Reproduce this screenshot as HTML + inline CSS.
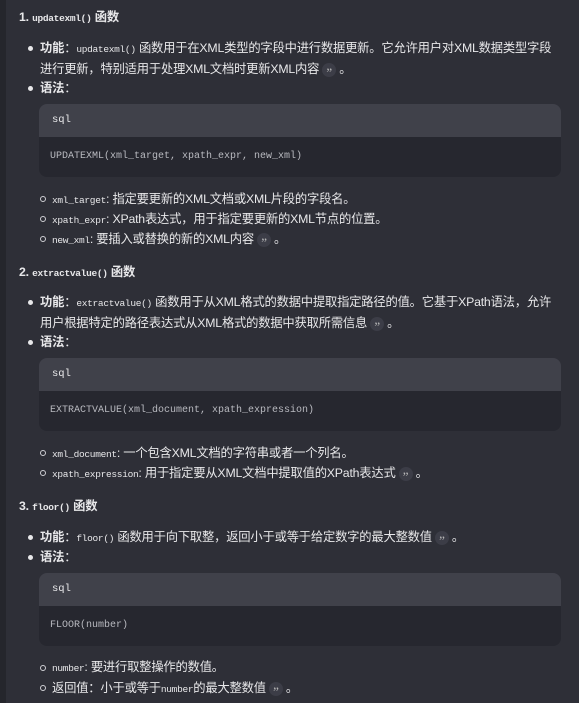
<!DOCTYPE html>
<html><head><meta charset="utf-8"><style>
*{margin:0;padding:0;box-sizing:border-box}
body{width:579px;height:703px;background:#2e2f37;position:relative;overflow:hidden;font-family:"Liberation Sans","Noto Sans CJK SC",sans-serif;font-size:12.3px;color:#e8e8ea}
.strip{position:absolute;left:0;top:0;width:6px;height:703px;background:#25262c}
.t{position:absolute;white-space:nowrap;line-height:16px;letter-spacing:-0.2px}
.h{font-weight:bold}
.m{font-family:"Liberation Mono",monospace;font-size:9.5px;letter-spacing:-0.3px}
b{font-weight:bold}
.dot{position:absolute;width:5px;height:5px;border-radius:50%;background:#e8e8ea}
.circ{position:absolute;width:6px;height:6px;border-radius:50%;border:1px solid #cfcfd4}
.code{position:absolute;left:39px;width:522px;border-radius:8px;overflow:hidden}
.ch{height:33px;background:#40414a;font-family:"Liberation Mono",monospace;font-size:10.5px;padding:10px 13px;color:#e8e8ea}
.cb{height:40px;background:#26272f;font-family:"Liberation Mono",monospace;font-size:10px;padding:14px 11px;color:#b9bac0}
.q{display:inline-block;width:14px;height:14px;border-radius:50%;background:#3c3d47;color:#bbb;font-size:13px;text-align:center;line-height:20px;vertical-align:middle;margin:0 3px;font-family:"Liberation Serif",serif;overflow:hidden}
</style></head><body>
<div class="strip"></div>

<div class="t h" style="left:19px;top:9px">1. <span class="m">updatexml()</span> 函数</div>
<div class="dot" style="left:28px;top:46px"></div>
<div class="t" style="left:40px;top:40px"><b>功能</b>：<span class="m">updatexml()</span> 函数用于在XML类型的字段中进行数据更新。它允许用户对XML数据类型字段</div>
<div class="t" style="left:40px;top:61px">进行更新，特别适用于处理XML文档时更新XML内容<span class="q">”</span>。</div>
<div class="dot" style="left:28px;top:86px"></div>
<div class="t" style="left:40px;top:80px"><b>语法</b>：</div>
<div class="code" style="top:104px"><div class="ch">sql</div><div class="cb">UPDATEXML(xml_target, xpath_expr, new_xml)</div></div>
<div class="circ" style="left:40px;top:196px"></div>
<div class="t" style="left:52px;top:191px"><span class="m">xml_target</span>: 指定要更新的XML文档或XML片段的字段名。</div>
<div class="circ" style="left:40px;top:216px"></div>
<div class="t" style="left:52px;top:211px"><span class="m">xpath_expr</span>: XPath表达式，用于指定要更新的XML节点的位置。</div>
<div class="circ" style="left:40px;top:236px"></div>
<div class="t" style="left:52px;top:231px"><span class="m">new_xml</span>: 要插入或替换的新的XML内容<span class="q">”</span>。</div>

<div class="t h" style="left:19px;top:264px">2. <span class="m">extractvalue()</span> 函数</div>
<div class="dot" style="left:28px;top:300px"></div>
<div class="t" style="left:40px;top:294px"><b>功能</b>：<span class="m">extractvalue()</span> 函数用于从XML格式的数据中提取指定路径的值。它基于XPath语法，允许</div>
<div class="t" style="left:40px;top:315px">用户根据特定的路径表达式从XML格式的数据中获取所需信息<span class="q">”</span>。</div>
<div class="dot" style="left:28px;top:340px"></div>
<div class="t" style="left:40px;top:334px"><b>语法</b>：</div>
<div class="code" style="top:358px"><div class="ch">sql</div><div class="cb">EXTRACTVALUE(xml_document, xpath_expression)</div></div>
<div class="circ" style="left:40px;top:450px"></div>
<div class="t" style="left:52px;top:445px"><span class="m">xml_document</span>: 一个包含XML文档的字符串或者一个列名。</div>
<div class="circ" style="left:40px;top:470px"></div>
<div class="t" style="left:52px;top:465px"><span class="m">xpath_expression</span>: 用于指定要从XML文档中提取值的XPath表达式<span class="q">”</span>。</div>

<div class="t h" style="left:19px;top:498px">3. <span class="m">floor()</span> 函数</div>
<div class="dot" style="left:28px;top:535px"></div>
<div class="t" style="left:40px;top:529px"><b>功能</b>：<span class="m">floor()</span> 函数用于向下取整，返回小于或等于给定数字的最大整数值<span class="q">”</span>。</div>
<div class="dot" style="left:28px;top:555px"></div>
<div class="t" style="left:40px;top:549px"><b>语法</b>：</div>
<div class="code" style="top:573px"><div class="ch">sql</div><div class="cb">FLOOR(number)</div></div>
<div class="circ" style="left:40px;top:665px"></div>
<div class="t" style="left:52px;top:659px"><span class="m">number</span>: 要进行取整操作的数值。</div>
<div class="circ" style="left:40px;top:685px"></div>
<div class="t" style="left:52px;top:680px">返回值：小于或等于<span class="m">number</span>的最大整数值<span class="q">”</span>。</div>
</body></html>
